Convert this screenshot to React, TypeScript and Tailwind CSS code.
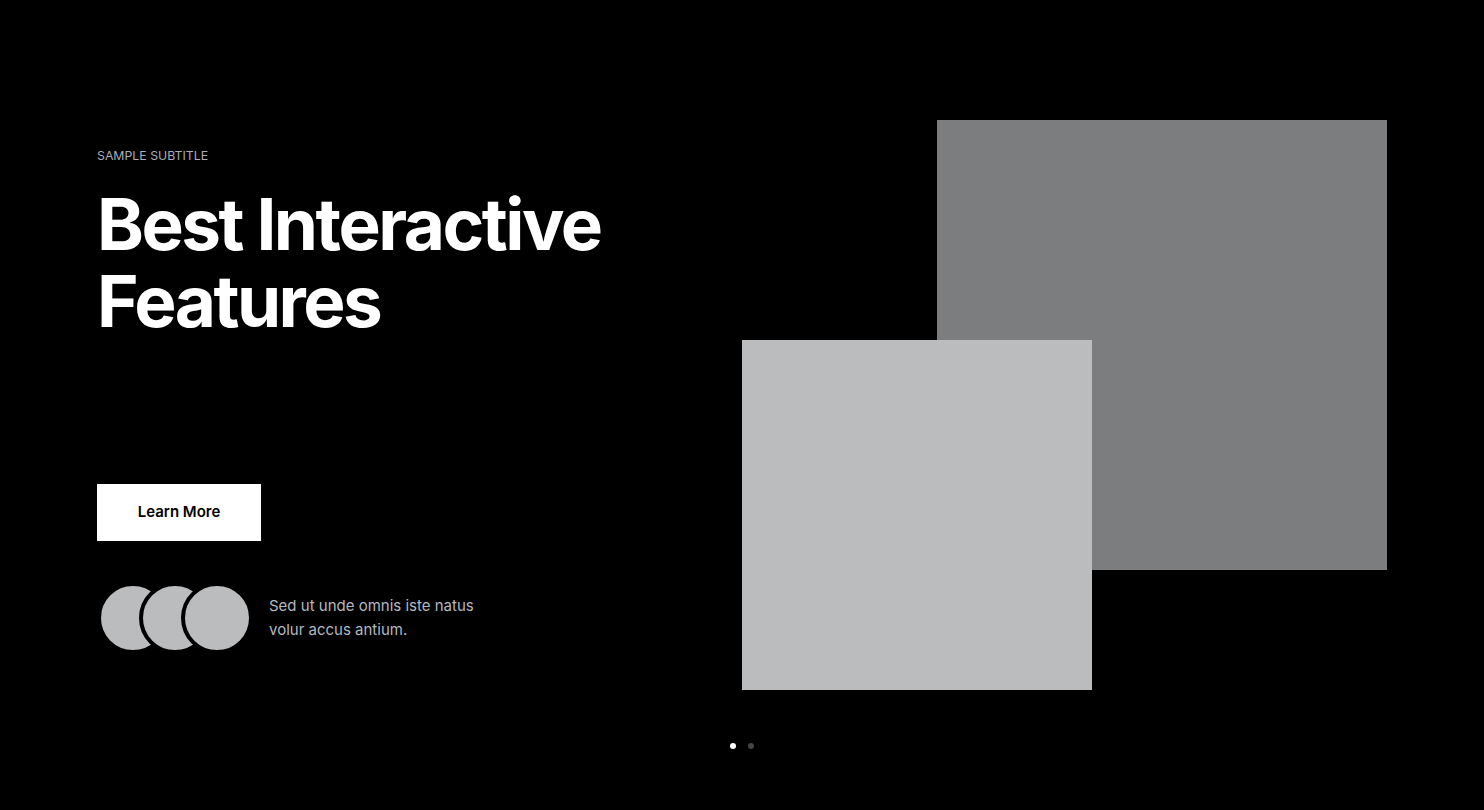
export default function App() {
  const avatars = [0, 1, 2];

  return (
    <div className="min-h-[810px] w-full bg-black font-['Inter',sans-serif] overflow-hidden">
      <section className="pt-[120px]">
        <div className="mx-auto grid w-[1290px] grid-cols-2">
          {/* left copy */}
          <div className="flex flex-col pt-[28px]">
            <span className="text-[12.3px] leading-[16px] uppercase text-[#a9aeb8]">Sample Subtitle</span>
            <h1 className="mt-[22px] text-[71px] font-bold leading-[77px] tracking-[-0.035em] text-white">
              Best Interactive
              <br />
              Features
            </h1>

            <button className="mt-[144px] h-[57px] w-[164px] bg-white text-[15px] font-semibold text-black">
              Learn More
            </button>

            <div className="mt-[41px] flex items-center">
              <div className="flex">
                {avatars.map((i) => (
                  <div
                    key={i}
                    className="h-[72px] w-[72px] rounded-full border-4 border-black bg-[#bbbcbe] first:ml-0 -ml-[30px]"
                  />
                ))}
              </div>
              <p className="ml-[16px] text-[15px] leading-[24px] text-[#b4b8c0]">
                Sed ut unde omnis iste natus
                <br />
                volur accus antium.
              </p>
            </div>
          </div>

          {/* right images */}
          <div className="flex flex-col">
            <div className="h-[450px] w-[450px] self-end bg-[#7c7d7f]" />
            <div className="relative -mt-[230px] h-[350px] w-[350px] bg-[#bbbcbe]" />
          </div>
        </div>

        <div className="mt-[53px] flex justify-center gap-[12px]">
          <span className="h-[6px] w-[6px] rounded-full bg-white" />
          <span className="h-[6px] w-[6px] rounded-full bg-[#444]" />
        </div>
      </section>
    </div>
  );
}
